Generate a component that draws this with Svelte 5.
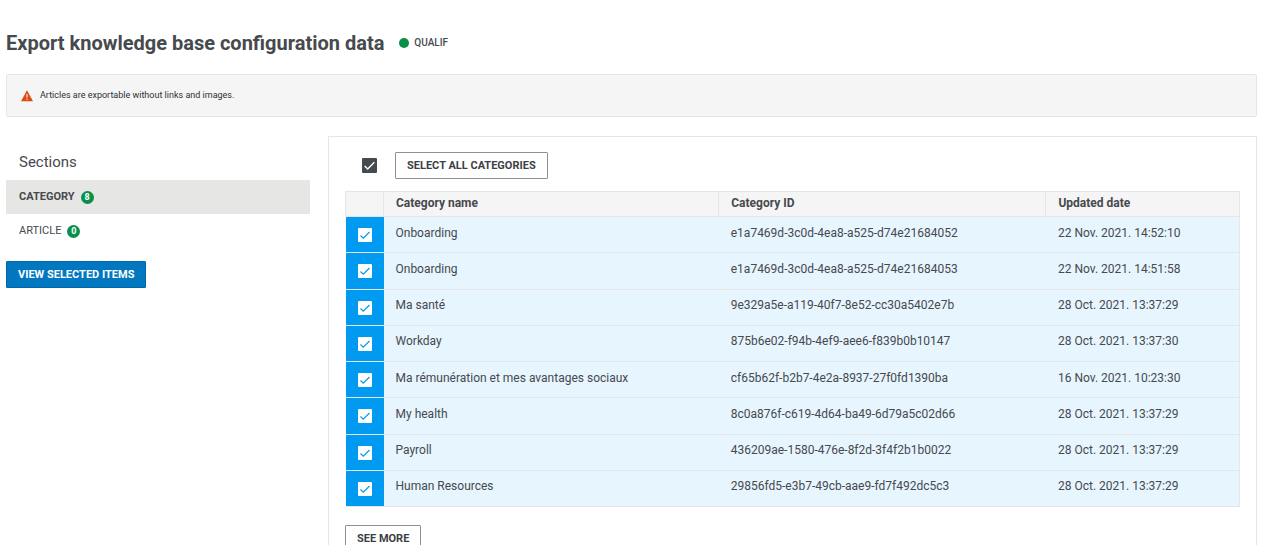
<style>
    :global(body) {
        background: #fff;
        color: #46494d;
        font-family: Roboto, "Liberation Sans", sans-serif;
        font-size: 12px;
    }
    .page {
        box-sizing: border-box;
        height: 100vh;
        padding: 31px 4px 0 6px;
        overflow: hidden;
    }
    header {
        display: flex;
        align-items: center;
        gap: 15px;
    }
    h1 {
        margin: 0;
        font-size: 20px;
        line-height: 24px;
    }
    .env {
        display: flex;
        align-items: center;
        gap: 5px;
        font-size: 10px;
        font-weight: 500;
        line-height: 12px;
    }
    .dot {
        width: 10px;
        height: 10px;
        border-radius: 50%;
        background: #0a8f4b;
    }
    .notice {
        display: flex;
        align-items: center;
        gap: 7px;
        margin-top: 19px;
        padding: 14px;
        border: 1px solid #e6e6e6;
        border-radius: 2px;
        background: #f5f5f5;
        color: #2e3136;
        font-size: 9px;
        line-height: 13px;
    }
    .notice svg {
        width: 12px;
        height: 12px;
    }
    .content {
        display: grid;
        grid-template-columns: 304px 1fr;
        gap: 18px;
        align-items: start;
        margin-top: 19px;
    }
    h2 {
        margin: 0;
        padding: 16px 13px 8px;
        font-size: 15px;
        font-weight: 400;
        line-height: 20px;
    }
    .section {
        display: flex;
        align-items: center;
        gap: 6px;
        padding: 0 13px;
        color: inherit;
        font-size: 11px;
        line-height: 34px;
        text-decoration: none;
    }
    .active {
        background: #e6e6e4;
        font-weight: 700;
    }
    .badge {
        width: 13px;
        height: 13px;
        border-radius: 50%;
        background: #0a8f4b;
        color: #fff;
        font-size: 9px;
        font-weight: 700;
        line-height: 12px;
        text-align: center;
    }
    button {
        box-sizing: border-box;
        height: 27px;
        padding: 0 11px;
        border: 1px solid #8b9095;
        border-radius: 1px;
        background: #fff;
        color: #3c3f44;
        font: 700 11px/25px Roboto, "Liberation Sans", sans-serif;
        cursor: pointer;
    }
    .primary {
        margin-top: 13px;
        border-color: #0069ab;
        background: #0077bf;
        color: #fff;
    }
    .panel {
        padding: 15px 16px 20px;
        border: 1px solid #e6e6e6;
    }
    .toolbar {
        display: flex;
        align-items: center;
        gap: 18px;
        margin-bottom: 12px;
        padding-left: 17px;
    }
    .check {
        display: grid;
        width: 14px;
        height: 14px;
        margin: auto;
    }
    .toolbar .check {
        width: 15px;
        height: 15px;
        margin: 0;
    }
    .check input, .check svg {
        grid-area: 1 / 1;
        width: 100%;
        height: 100%;
    }
    .check input {
        appearance: none;
        margin: 0;
        border-radius: 1px;
        background: #fff;
        cursor: pointer;
    }
    .toolbar .check input {
        background: #46494d;
    }
    .check svg {
        fill: none;
        stroke: #009bf0;
        pointer-events: none;
    }
    .toolbar .check svg {
        stroke: #fff;
    }
    .check input:not(:checked) + svg {
        visibility: hidden;
    }
    table {
        width: 100%;
        height: 316px;
        margin-bottom: 18px;
        border-collapse: collapse;
        table-layout: fixed;
    }
    th, td {
        box-sizing: border-box;
        padding: 0 12px;
        border: 1px solid #e6e6e6;
        text-align: left;
    }
    th {
        height: 25px;
        padding-bottom: 2px;
        background: #f5f5f5;
        font-weight: 700;
        line-height: 16px;
    }
    td {
        height: 36px;
        padding-bottom: 4px;
        border-width: 1px 0;
        line-height: 16px;
    }
    td:last-child {
        border-right-width: 1px;
    }
    .pick {
        width: 38px;
    }
    .name {
        width: 37.5%;
    }
    .id {
        width: 36.6%;
    }
    td.pick {
        padding: 1px 0 0;
    }
    .selected {
        background: #e7f5ff;
    }
    .selected .pick {
        background: #009bf0;
    }
</style>
<script>
    let all = true;
    let current = 'CATEGORY';
    let rows = [
        { name: 'Onboarding', id: 'e1a7469d-3c0d-4ea8-a525-d74e21684052', date: '22 Nov. 2021. 14:52:10', checked: true },
        { name: 'Onboarding', id: 'e1a7469d-3c0d-4ea8-a525-d74e21684053', date: '22 Nov. 2021. 14:51:58', checked: true },
        { name: 'Ma santé', id: '9e329a5e-a119-40f7-8e52-cc30a5402e7b', date: '28 Oct. 2021. 13:37:29', checked: true },
        { name: 'Workday', id: '875b6e02-f94b-4ef9-aee6-f839b0b10147', date: '28 Oct. 2021. 13:37:30', checked: true },
        { name: 'Ma rémunération et mes avantages sociaux', id: 'cf65b62f-b2b7-4e2a-8937-27f0fd1390ba', date: '16 Nov. 2021. 10:23:30', checked: true },
        { name: 'My health', id: '8c0a876f-c619-4d64-ba49-6d79a5c02d66', date: '28 Oct. 2021. 13:37:29', checked: true },
        { name: 'Payroll', id: '436209ae-1580-476e-8f2d-3f4f2b1b0022', date: '28 Oct. 2021. 13:37:29', checked: true },
        { name: 'Human Resources', id: '29856fd5-e3b7-49cb-aae9-fd7f492dc5c3', date: '28 Oct. 2021. 13:37:29', checked: true },
    ];
    $: sections = [
        { label: 'CATEGORY', count: rows.filter(r => r.checked).length },
        { label: 'ARTICLE', count: 0 },
    ];
    function setAll(value) {
        all = value;
        rows = rows.map(r => ({ ...r, checked: value }));
    }
</script>
<div class="page">
    <header>
        <h1>Export knowledge base configuration data</h1>
        <div class="env"><span class="dot"></span>QUALIF</div>
    </header>
    <div class="notice">
        <svg viewBox="0 0 12 12" aria-hidden="true">
            <path d="M6 .2 L12 11.2 H0 Z" fill="#e04a12" />
            <path d="M6 4v3.6M6 8.6v1.2" stroke="#fff" stroke-width="1" />
        </svg>
        <span>Articles are exportable without links and images.</span>
    </div>
    <div class="content">
        <nav>
            <h2>Sections</h2>
            {#each sections as s}
                <a class="section" class:active={s.label === current} href="#{s.label}" on:click={() => current = s.label}>
                    {s.label}<span class="badge">{s.count}</span>
                </a>
            {/each}
            <button class="primary">VIEW SELECTED ITEMS</button>
        </nav>
        <main class="panel">
            <div class="toolbar">
                <label class="check">
                    <input type="checkbox" aria-label="Select all categories" checked={all} on:change={e => setAll(e.currentTarget.checked)} />
                    <svg viewBox="0 0 14 14"><path d="M2.5 7.5 L5.3 10.2 L11.5 4" stroke-width="1.3" /></svg>
                </label>
                <button on:click={() => setAll(true)}>SELECT ALL CATEGORIES</button>
            </div>
            <table>
                <thead>
                    <tr>
                        <th class="pick"></th>
                        <th class="name">Category name</th>
                        <th class="id">Category ID</th>
                        <th>Updated date</th>
                    </tr>
                </thead>
                <tbody>
                    {#each rows as row}
                        <tr class:selected={row.checked}>
                            <td class="pick">
                                <label class="check">
                                    <input type="checkbox" aria-label={row.name} bind:checked={row.checked} />
                                    <svg viewBox="0 0 14 14"><path d="M2.5 7.5 L5.3 10.2 L11.5 4" stroke-width="1.2" /></svg>
                                </label>
                            </td>
                            <td>{row.name}</td>
                            <td>{row.id}</td>
                            <td>{row.date}</td>
                        </tr>
                    {/each}
                </tbody>
            </table>
            <button>SEE MORE</button>
        </main>
    </div>
</div>
